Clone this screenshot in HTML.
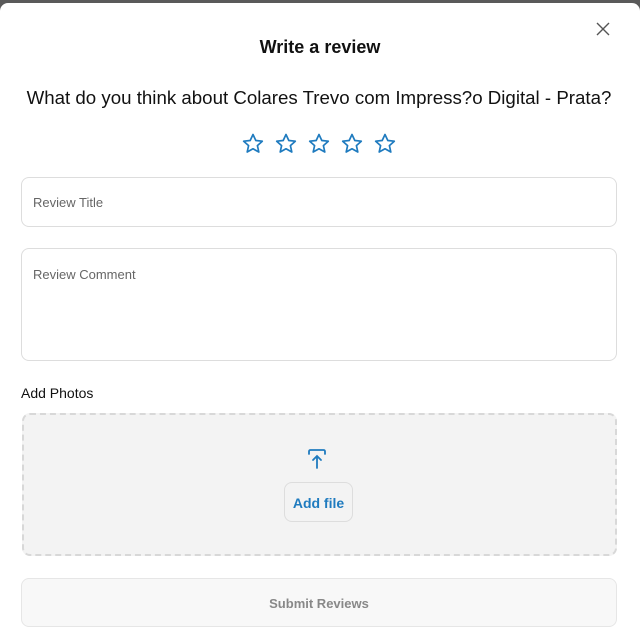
<!DOCTYPE html><html><head><style>
body{margin:0;width:640px;height:640px;background:#5a5a5a;font-family:"Liberation Sans",sans-serif;overflow:hidden;position:relative}
.m{position:absolute;left:0;top:3px;width:640px;height:640px;background:#fff;border-radius:8px 8px 0 0}
.a{position:absolute}
.box{position:absolute;left:21px;width:596px;border:1px solid #ddd;border-radius:8px;box-sizing:border-box;font-size:13px;color:#666;padding-left:11px}
</style></head><body><div class="m"></div>
<svg class="a" style="left:595px;top:21px" width="16" height="16"><path d="M2 2L14 14M14 2L2 14" stroke="#555" stroke-width="1.4"/></svg>
<div class="a" style="left:0;width:640px;top:37px;text-align:center;font-size:18px;font-weight:bold;color:#111">Write a review</div>
<div class="a" style="left:0;width:638px;top:87px;text-align:center;font-size:18.7px;color:#111">What do you think about Colares Trevo com Impress?o Digital - Prata?</div>
<svg class="a" style="left:241px;top:132px" width="160" height="24" fill="none" stroke="#1f7bbf" stroke-width="1.7" stroke-linejoin="round">
<g id="s"><path d="M12 2.5l2.8 6 6.5.7-4.9 4.4 1.4 6.4L12 16.8 6.2 20l1.4-6.4-4.9-4.4 6.5-.7z"/></g>
<use href="#s" x="33"/><use href="#s" x="66"/><use href="#s" x="99"/><use href="#s" x="132"/></svg>
<div class="box" style="top:177px;height:50px;line-height:50px">Review Title</div>
<div class="box" style="top:248px;height:113px;padding-top:18px">Review Comment</div>
<div class="a" style="left:21px;top:385px;font-size:14px;color:#111">Add Photos</div>
<div class="a" style="left:22px;top:413px;width:595px;height:143px;box-sizing:border-box;border:2px dashed #d8d8d8;border-radius:8px;background:#f3f3f3"></div>
<svg class="a" style="left:307px;top:448px" width="22" height="22" fill="none" stroke="#1f7bbf" stroke-width="1.8" stroke-linecap="round"><path d="M2 6V3.5Q2 2 3.5 2h13Q18 2 18 3.5V6M10 20V8M6 12l4-4 4 4"/></svg>
<div class="a" style="left:284px;top:482px;width:69px;height:40px;box-sizing:border-box;border:1px solid #ddd;border-radius:8px;text-align:center;line-height:40px;font-size:14px;font-weight:bold;color:#1f7bbf">Add file</div>
<div class="a" style="left:21px;top:578px;width:596px;height:49px;box-sizing:border-box;border:1px solid #e6e6e6;border-radius:8px;background:#f8f8f8;text-align:center;line-height:49px;font-size:13px;font-weight:bold;color:#888">Submit Reviews</div>
</body></html>
